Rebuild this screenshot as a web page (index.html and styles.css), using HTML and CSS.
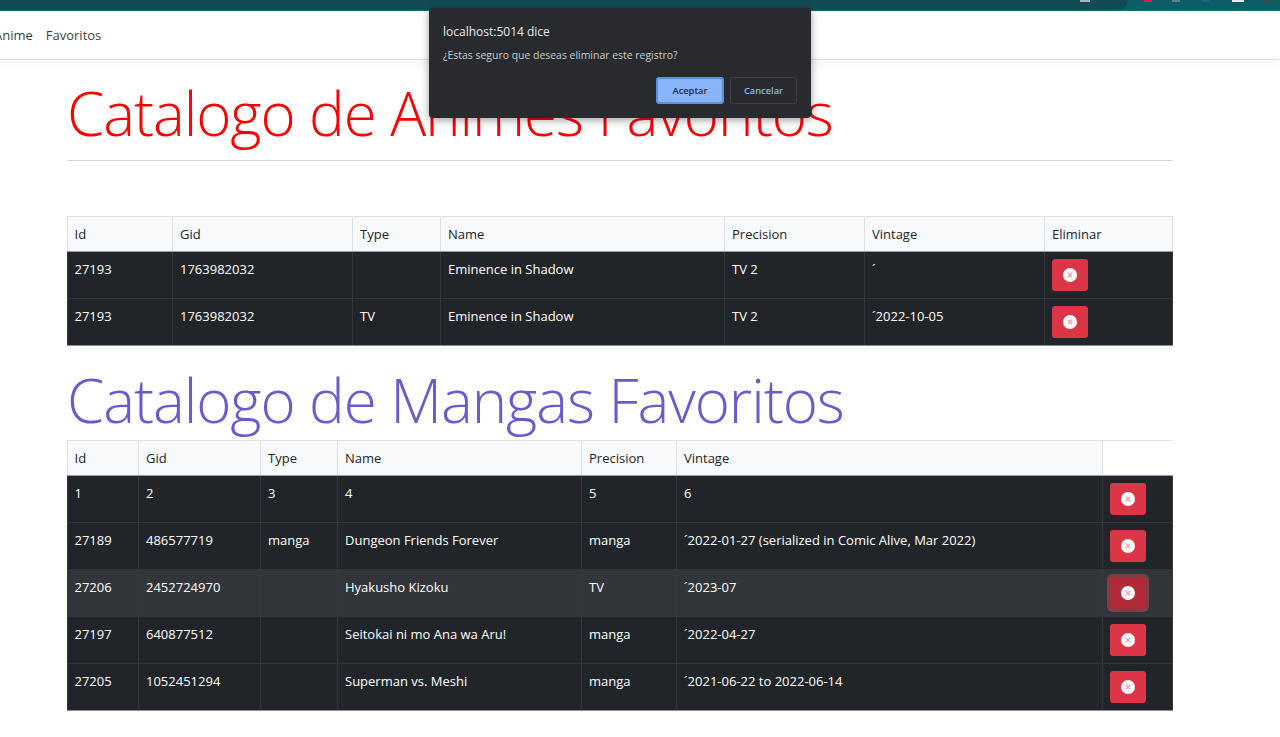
FILE: index.html
```html
<!DOCTYPE html>
<html>
<head>
  <title>Catalogo de Animes</title>
  <link rel="stylesheet" href="styles.css">
</head>
<body>
  <div class="browser-bar">
    <div class="omnibox"><span class="bar-icon pale"></span></div>
    <span class="bar-icon red"></span>
    <span class="bar-icon grey"></span>
    <span class="bar-icon blue"></span>
    <span class="bar-icon white"></span>
    <span class="bar-icon dark"></span>
  </div>

  <nav class="navbar">
    <a href="#">Anime</a>
    <a href="#">Favoritos</a>
  </nav>

  <div class="container">
    <h1 class="title red-title">Catalogo de Animes Favoritos</h1>
    <hr class="rule">

    <table class="grid anime-grid">
      <colgroup>
        <col class="a1"><col class="a2"><col class="a3"><col class="a4"><col class="a5"><col class="a6"><col class="a7">
      </colgroup>
      <thead>
        <tr><th>Id</th><th>Gid</th><th>Type</th><th>Name</th><th>Precision</th><th>Vintage</th><th>Eliminar</th></tr>
      </thead>
      <tbody>
        <tr>
          <td>27193</td><td>1763982032</td><td></td><td>Eminence in Shadow</td><td>TV 2</td><td>´</td>
          <td><button class="btn-del"><svg viewBox="0 0 16 16"><circle cx="8" cy="8" r="7"/><path d="M5.8 5.8l4.4 4.4M10.2 5.8l-4.4 4.4"/></svg></button></td>
        </tr>
        <tr>
          <td>27193</td><td>1763982032</td><td>TV</td><td>Eminence in Shadow</td><td>TV 2</td><td>´2022-10-05</td>
          <td><button class="btn-del"><svg viewBox="0 0 16 16"><circle cx="8" cy="8" r="7"/><path d="M5.8 5.8l4.4 4.4M10.2 5.8l-4.4 4.4"/></svg></button></td>
        </tr>
      </tbody>
    </table>

    <h1 class="title blue-title">Catalogo de Mangas Favoritos</h1>

    <table class="grid manga-grid">
      <colgroup>
        <col class="m1"><col class="m2"><col class="m3"><col class="m4"><col class="m5"><col class="m6"><col class="m7">
      </colgroup>
      <thead>
        <tr><th>Id</th><th>Gid</th><th>Type</th><th>Name</th><th>Precision</th><th>Vintage</th><th class="no-edge"></th></tr>
      </thead>
      <tbody>
        <tr>
          <td>1</td><td>2</td><td>3</td><td>4</td><td>5</td><td>6</td>
          <td><button class="btn-del"><svg viewBox="0 0 16 16"><circle cx="8" cy="8" r="7"/><path d="M5.8 5.8l4.4 4.4M10.2 5.8l-4.4 4.4"/></svg></button></td>
        </tr>
        <tr>
          <td>27189</td><td>486577719</td><td>manga</td><td>Dungeon Friends Forever</td><td>manga</td><td>´2022-01-27 (serialized in Comic Alive, Mar 2022)</td>
          <td><button class="btn-del"><svg viewBox="0 0 16 16"><circle cx="8" cy="8" r="7"/><path d="M5.8 5.8l4.4 4.4M10.2 5.8l-4.4 4.4"/></svg></button></td>
        </tr>
        <tr class="hovered">
          <td>27206</td><td>2452724970</td><td></td><td>Hyakusho Kizoku</td><td>TV</td><td>´2023-07</td>
          <td><button class="btn-del focused"><svg viewBox="0 0 16 16"><circle cx="8" cy="8" r="7"/><path d="M5.8 5.8l4.4 4.4M10.2 5.8l-4.4 4.4"/></svg></button></td>
        </tr>
        <tr>
          <td>27197</td><td>640877512</td><td></td><td>Seitokai ni mo Ana wa Aru!</td><td>manga</td><td>´2022-04-27</td>
          <td><button class="btn-del"><svg viewBox="0 0 16 16"><circle cx="8" cy="8" r="7"/><path d="M5.8 5.8l4.4 4.4M10.2 5.8l-4.4 4.4"/></svg></button></td>
        </tr>
        <tr>
          <td>27205</td><td>1052451294</td><td></td><td>Superman vs. Meshi</td><td>manga</td><td>´2021-06-22 to 2022-06-14</td>
          <td><button class="btn-del"><svg viewBox="0 0 16 16"><circle cx="8" cy="8" r="7"/><path d="M5.8 5.8l4.4 4.4M10.2 5.8l-4.4 4.4"/></svg></button></td>
        </tr>
      </tbody>
    </table>
  </div>

  <div class="dialog">
    <div class="dialog-host">localhost:5014 dice</div>
    <div class="dialog-msg">¿Estas seguro que deseas eliminar este registro?</div>
    <div class="dialog-actions">
      <button class="dlg-btn dlg-ok">Aceptar</button>
      <button class="dlg-btn dlg-cancel">Cancelar</button>
    </div>
  </div>
</body>
</html>
```

FILE: styles.css
```css
* {
  box-sizing: border-box;
}
html, body {
  margin: 0;
  height: 737px;
  overflow: hidden;
}
body {
  background: #fff;
  font-family: "Open Sans", "Liberation Sans", sans-serif;
  font-size: 13px;
  color: #212529;
}

.browser-bar {
  height: 11px;
  display: flex;
  align-items: flex-start;
  background: #0b5e66;
  border-bottom: 1px solid #12706f;
}
.omnibox {
  display: flex;
  justify-content: flex-end;
  width: 1128px;
  height: 10px;
  padding-right: 38px;
  background: #124b52;
  border-radius: 0 0 14px 0;
  margin-right: 16px;
}
.bar-icon {
  height: 2px;
  width: 8px;
}
.bar-icon.pale {
  width: 10px;
  background: #a9b4b6;
}
.bar-icon.red {
  background: #e8174a;
  margin-right: 20px;
}
.bar-icon.grey {
  background: #5f8489;
  margin-right: 22px;
}
.bar-icon.blue {
  background: #1f5f8f;
  margin-right: 22px;
}
.bar-icon.white {
  background: #e4edf2;
  width: 12px;
  margin-right: 19px;
}
.bar-icon.dark {
  background: #3c4a55;
}

.navbar {
  height: 49px;
  display: flex;
  align-items: center;
  gap: 13px;
  margin-left: -6px;
  border-bottom: 1px solid #dfe1e3;
  box-shadow: 0 4px 8px rgba(0, 0, 0, .04);
}
.navbar a {
  color: #3a3f45;
  text-decoration: none;
}

.container {
  width: 1106px;
  margin-left: 67px;
}
.title {
  margin: 0;
  font-weight: 300;
  font-size: 60px;
  letter-spacing: -1.05px;
  line-height: 80px;
}
.red-title {
  color: #f00;
  padding-top: 13px;
  height: 100px;
}
.blue-title {
  color: #6a5acd;
  height: 94px;
  padding-top: 14px;
}
.rule {
  margin: 0 0 55px;
  border: 0;
  border-top: 1px solid #d3d4d5;
}

.grid {
  width: 1105px;
  table-layout: fixed;
  border-collapse: collapse;
}
.grid th, .grid td {
  text-align: left;
  vertical-align: top;
  font-weight: 400;
}
.grid th {
  padding: 7px 6px 7px 7px;
  line-height: 20px;
  background: #f8f9fa;
  border: 1px solid #dee2e6;
  border-bottom: 1px solid #9a9da0;
  color: #212529;
}
.grid th.no-edge {
  border-right: 0;
  background: #fff;
}
.grid td {
  padding: 7px 6px 7px 7px;
  line-height: 21px;
  background: #212529;
  color: #fff;
  border: 1px solid #32383e;
}
.grid th:first-child, .grid td:first-child {
  padding-left: 6.5px;
}
.grid tbody tr:last-child td {
  border-bottom: 1px solid #8b8e91;
}
.grid tr.hovered td {
  background: #32363b;
}

.a1 { width: 105px; }
.a2 { width: 180px; }
.a3 { width: 88px; }
.a4 { width: 284px; }
.a5 { width: 140px; }
.a6 { width: 180px; }
.a7 { width: 128px; }

.m1 { width: 71px; }
.m2 { width: 122px; }
.m3 { width: 77px; }
.m4 { width: 244px; }
.m5 { width: 95px; }
.m6 { width: 426px; }
.m7 { width: 70px; }

.btn-del {
  display: flex;
  align-items: center;
  justify-content: center;
  width: 36px;
  height: 32px;
  padding: 0;
  border: 0;
  border-radius: 3px;
  background: #dc3545;
}
.btn-del svg {
  width: 16px;
  height: 16px;
}
.btn-del circle {
  fill: #fff;
}
.btn-del path {
  fill: none;
  stroke: #efa0a8;
  stroke-width: 1.3;
}
.btn-del.focused {
  background: #b02a37;
  box-shadow: 0 0 0 3px rgba(225, 83, 97, .4);
}

.dialog {
  position: absolute;
  top: 8px;
  left: 429px;
  width: 382px;
  height: 110px;
  padding: 15px 14px 0;
  background: #292a2d;
  border-radius: 4px;
  box-shadow: 0 2px 8px rgba(0, 0, 0, .4);
  color: #e8eaed;
}
.dialog-host {
  font-size: 12px;
  line-height: 17px;
}
.dialog-msg {
  margin-top: 8px;
  font-size: 10.45px;
  line-height: 15px;
  color: #c8cacd;
}
.dialog-actions {
  display: flex;
  justify-content: flex-end;
  gap: 6px;
  margin-top: 14px;
}
.dlg-btn {
  height: 27px;
  width: 67px;
  padding: 0;
  font-family: inherit;
  font-size: 9.3px;
  font-weight: 600;
  border-radius: 3px;
}
.dlg-ok {
  width: 68px;
  background: #8ab4f8;
  color: #292a2d;
  border: 2px solid #5f8fe0;
}
.dlg-cancel {
  background: #292a2d;
  color: #8ab4f8;
  border: 1px solid #3c4043;
}
```
